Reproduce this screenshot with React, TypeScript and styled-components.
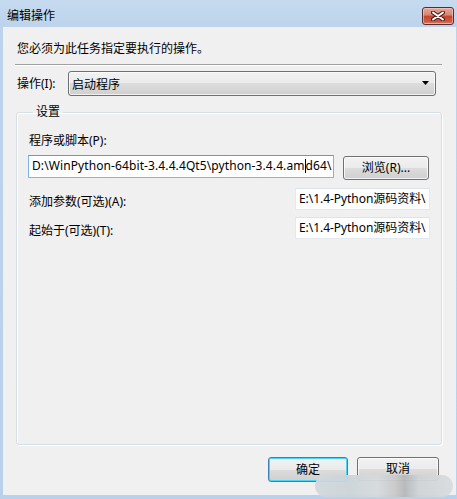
import React from "react";
import styled, { createGlobalStyle } from "styled-components";

const Global = createGlobalStyle`
  html, body { margin: 0; padding: 0; background: #b9d1ea; }
  body {
    font-family: "Noto Sans", "Noto Sans CJK SC", sans-serif;
    font-size: 12px;
    color: #000;
  }
`;

const Window = styled.div`
  width: 457px;
  height: 499px;
  box-sizing: border-box;
  padding: 0 1px 4px 3px;
  background: linear-gradient(#c6dbf0 0px, #bcd3eb 27px, #b9d1ea 100%);
  display: flex;
  flex-direction: column;
  position: relative;
  overflow: hidden;
`;

const TitleBar = styled.div`
  height: 27px;
  flex: none;
  display: flex;
  align-items: flex-start;
  justify-content: space-between;
  padding: 7px 2px 0 4px;
  box-sizing: border-box;
`;

const Title = styled.div`
  line-height: 18px;
  font-size: 12px;
  color: #000;
`;

const CloseButton = styled.div`
  width: 32px;
  height: 18px;
  box-sizing: border-box;
  border: 1px solid #5b2b2b;
  border-radius: 3px;
  background: linear-gradient(#e8a597 0%, #d98372 45%, #c2442f 50%, #cc5a42 85%, #dc8a6f 100%);
  box-shadow: inset 0 0 0 1px rgba(255, 220, 210, 0.5);
  display: flex;
  align-items: center;
  justify-content: center;
`;

const Content = styled.div`
  flex: 1;
  background: #f0f0f0;
  display: flex;
  flex-direction: column;
  padding: 0 14px 13px 12px;
  min-height: 0;
`;

const Instruction = styled.div`
  margin-top: 14px;
  padding-left: 2px;
  line-height: 16px;
`;

const Separator = styled.div`
  margin-top: 7px;
  height: 1px;
  background: #a0a0a0;
  border-bottom: 1px solid #ffffff;
`;

const ActionRow = styled.div`
  margin-top: 5px;
  display: flex;
  align-items: center;
  padding-left: 2px;
`;

const ActionLabel = styled.span`
  width: 51px;
  line-height: 16px;
  padding-top: 1px;
`;

const Combo = styled.div`
  width: 368px;
  height: 25px;
  box-sizing: border-box;
  border: 1px solid #707070;
  border-radius: 3px;
  background: linear-gradient(#f2f2f2 0%, #ebebeb 50%, #dddddd 50%, #cfcfcf 100%);
  box-shadow: inset 0 0 0 1px rgba(255, 255, 255, 0.7);
  display: flex;
  align-items: center;
  justify-content: space-between;
  padding: 0 5px 0 3px;
`;

const Group = styled.fieldset`
  margin: 8px 0 0 1px;
  padding: 0 11px 0 11px;
  flex: 1;
  border: 1px solid #d5dfe5;
  border-radius: 3px;
  box-shadow: inset 1px 1px 0 #ffffff, 1px 1px 0 #ffffff;
  min-width: 0;
  display: flex;
  flex-direction: column;
`;

const Legend = styled.legend`
  margin-left: 5px;
  padding: 0 3px;
  line-height: 16px;
`;

const FieldLabel = styled.div`
  line-height: 16px;
  padding-left: 1px;
  margin-top: 13px;
`;

const PathRow = styled.div`
  margin-top: 6px;
  display: flex;
  align-items: flex-start;
  gap: 9px;
`;

const TextBox = styled.div<{ $focused?: boolean; $width: number }>`
  width: ${(p) => p.$width}px;
  height: ${(p) => (p.$focused ? 23 : 22)}px;
  box-sizing: border-box;
  background: #ffffff;
  border: 1px solid ${(p) => (p.$focused ? "#7eb4ea" : "#e3e9ef")};
  border-top-color: ${(p) => (p.$focused ? "#569de5" : "#dde3ea")};
  padding: 0 0 0 3px;
  line-height: 20px;
  white-space: nowrap;
  overflow: hidden;
  font-size: 12px;
  letter-spacing: ${(p) => (p.$focused ? "0.1px" : "-0.05px")};
`;

const Caret = styled.span`
  display: inline-block;
  width: 1px;
  height: 14px;
  background: #000;
  vertical-align: -3px;
`;

const Button = styled.div<{ $width: number; $default?: boolean }>`
  width: ${(p) => p.$width}px;
  height: ${(p) => (p.$default ? 25 : 24)}px;
  box-sizing: border-box;
  border: 1px solid ${(p) => (p.$default ? "#3c7fb1" : "#707070")};
  border-radius: 3px;
  background: linear-gradient(#f2f2f2 0%, #ebebeb 50%, #dddddd 50%, #cfcfcf 100%);
  box-shadow: inset 0 0 0 1px ${(p) => (p.$default ? "#48d7fb" : "rgba(255,255,255,0.75)")};
  display: flex;
  align-items: center;
  justify-content: center;
  line-height: 16px;
`;

const BrowseButton = styled(Button)`
  margin-top: 1px;
`;

const OptionRow = styled.div<{ $top: number }>`
  margin-top: ${(p) => p.$top}px;
  display: flex;
  align-items: center;
  justify-content: space-between;
`;

const OptionLabel = styled.span`
  line-height: 16px;
  padding-left: 1px;
  padding-top: 6px;
`;

const ButtonRow = styled.div`
  margin-top: 12px;
  display: flex;
  justify-content: flex-end;
  gap: 9px;
  padding-right: 3px;
`;

const Watermark = styled.div`
  position: absolute;
  left: 315px;
  top: 475px;
  width: 138px;
  height: 22px;
  border-radius: 11px;
  background: linear-gradient(
    90deg,
    #d2d9de 0%,
    #ccd4d9 25%,
    #d6dadd 45%,
    #c9c9c9 58%,
    #b5b8ba 65%,
    #cfd3d6 75%,
    #d9dcde 100%
  );
  opacity: 0.95;
`;

function CloseGlyph() {
  return (
    <svg width="14" height="10" viewBox="0 0 14 10">
      <path d="M2 1.5 L12 8.5 M12 1.5 L2 8.5" stroke="#4a2020" strokeWidth="4" strokeLinecap="round" />
      <path d="M2 1.5 L12 8.5 M12 1.5 L2 8.5" stroke="#ffffff" strokeWidth="2" strokeLinecap="round" />
    </svg>
  );
}

function DropArrow() {
  return (
    <svg width="8" height="5" viewBox="0 0 8 5">
      <path d="M0 0 H7 L3.5 4 Z" fill="#000" />
    </svg>
  );
}

export default function App() {
  return (
    <>
      <Global />
      <Window>
        <TitleBar>
          <Title>编辑操作</Title>
          <CloseButton>
            <CloseGlyph />
          </CloseButton>
        </TitleBar>
        <Content>
          <Instruction>您必须为此任务指定要执行的操作。</Instruction>
          <Separator />
          <ActionRow>
            <ActionLabel>操作(I):</ActionLabel>
            <Combo>
              <span>启动程序</span>
              <DropArrow />
            </Combo>
          </ActionRow>
          <Group>
            <Legend>设置</Legend>
            <FieldLabel>程序或脚本(P):</FieldLabel>
            <PathRow>
              <TextBox $focused $width={306}>
                D:\WinPython-64bit-3.4.4.4Qt5\python-3.4.4.am<Caret />d64\
              </TextBox>
              <BrowseButton $width={86}>浏览(R)...</BrowseButton>
            </PathRow>
            <OptionRow $top={8}>
              <OptionLabel>添加参数(可选)(A):</OptionLabel>
              <TextBox $width={135}>E:\1.4-Python源码资料\</TextBox>
            </OptionRow>
            <OptionRow $top={7}>
              <OptionLabel>起始于(可选)(T):</OptionLabel>
              <TextBox $width={135}>E:\1.4-Python源码资料\</TextBox>
            </OptionRow>
          </Group>
          <ButtonRow>
            <Button $default $width={80}>确定</Button>
            <Button $width={82}>取消</Button>
          </ButtonRow>
        </Content>
        <Watermark />
      </Window>
    </>
  );
}
